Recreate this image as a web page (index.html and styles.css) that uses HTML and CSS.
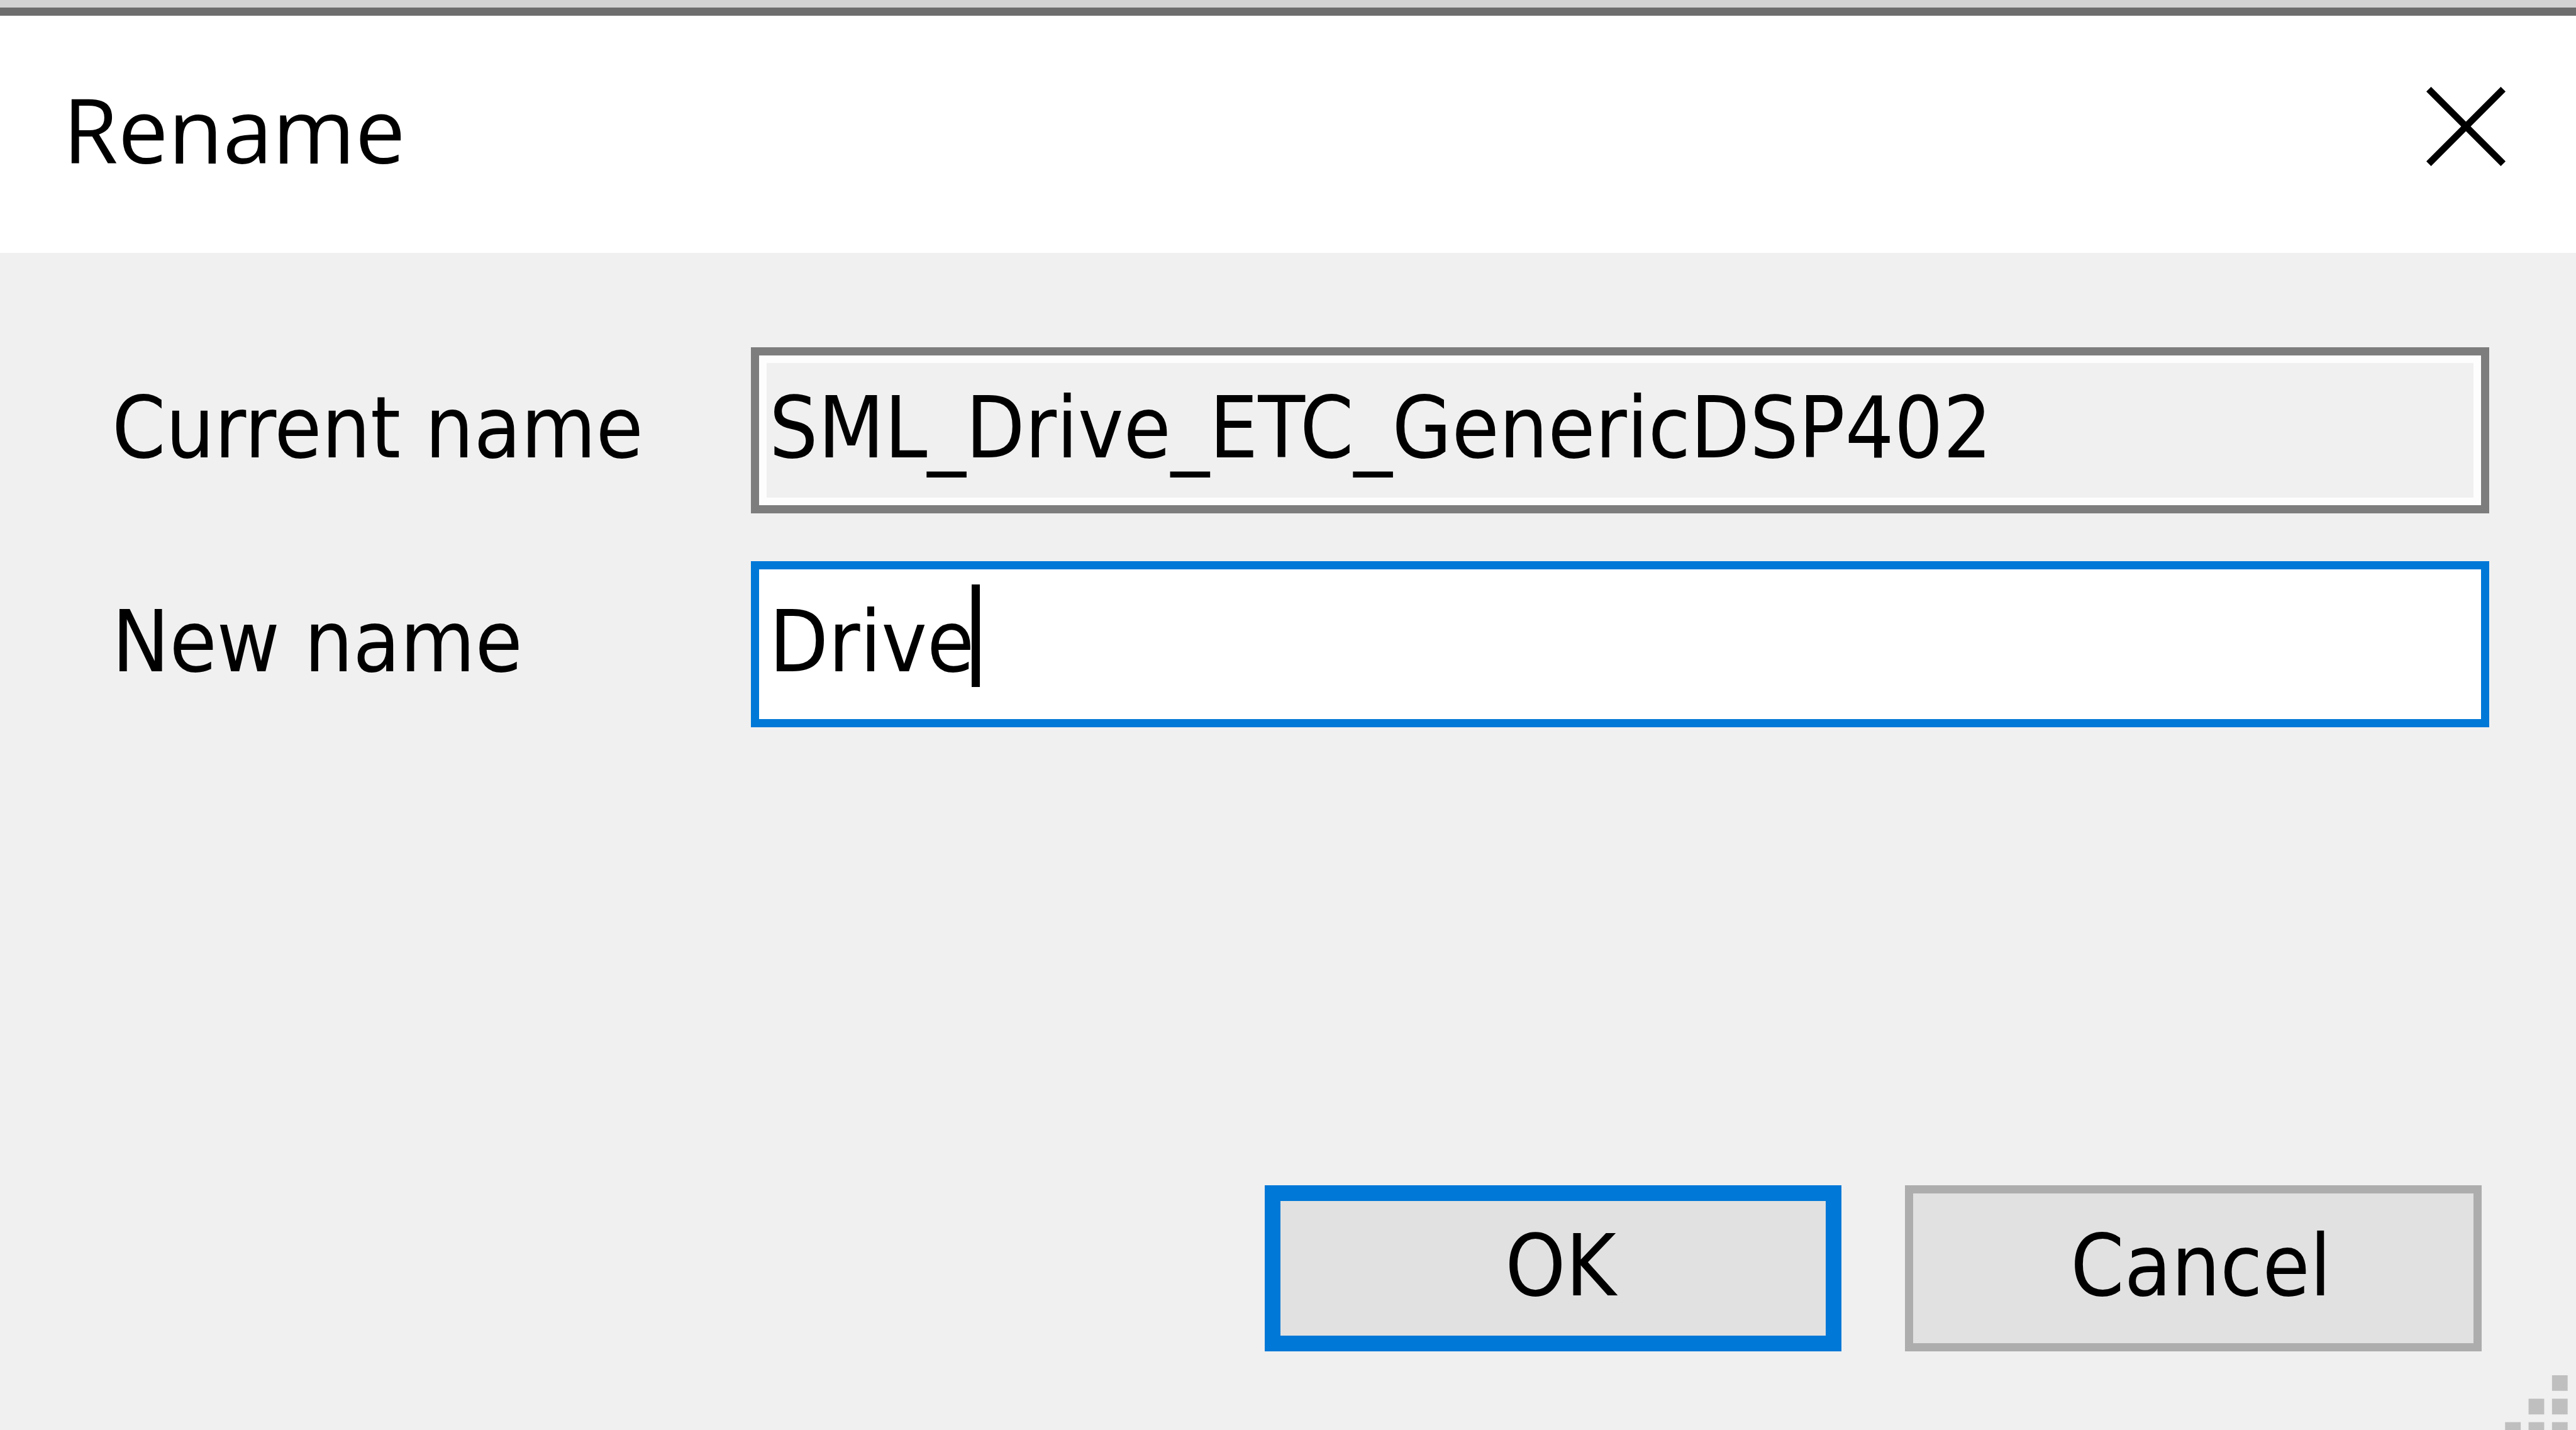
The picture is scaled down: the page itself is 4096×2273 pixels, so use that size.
FILE: index.html
```html
<!DOCTYPE html>
<html lang="en">
<head>
<meta charset="utf-8">
<title>Rename</title>
<link rel="stylesheet" href="styles.css">
</head>
<body>
<form class="dialog">
  <header class="titlebar">
    <h1 class="title">Rename</h1>
    <button class="close" type="button" aria-label="Close">
      <svg class="close-icon" viewBox="0 0 10 10" aria-hidden="true">
        <path d="M.3 .3 9.7 9.7M9.7 .3 .3 9.7"/>
      </svg>
    </button>
  </header>
  <main class="fields">
    <label class="label" for="current">Current name</label>
    <div class="field">
      <input class="input input-readonly" id="current" type="text" value="SML_Drive_ETC_GenericDSP402" readonly>
    </div>
    <label class="label" for="new">New name</label>
    <div class="field">
      <input class="input input-active" id="new" type="text" value="Drive" spellcheck="false">
      <span class="caret"></span>
    </div>
  </main>
  <footer class="actions">
    <button class="button button-default" type="submit">OK</button>
    <button class="button" type="button">Cancel</button>
  </footer>
  <svg class="grip" viewBox="0 0 8 7" aria-hidden="true">
    <path d="M6 0h2v2h-2zM3 3h2v2h-2zM6 3h2v2h-2zM0 6h2v1h-2zM3 6h2v1h-2zM6 6h2v1h-2z"/>
  </svg>
</form>
</body>
</html>
```
FILE: styles.css
```css
* {
  box-sizing: border-box;
}

body {
  margin: 0;
  background: #f0f0f0;
  color: #000;
  font-family: "DejaVu Sans Condensed", "DejaVu Sans", sans-serif;
  font-size: 136px;
  line-height: 160px;
}

.dialog {
  position: relative;
  display: flex;
  flex-direction: column;
  min-height: 100vh;
  border-top: 12px solid #d3d3d3;
}

.titlebar {
  display: flex;
  justify-content: space-between;
  align-items: center;
  padding: 80px 100px 97px;
  border-top: 13px solid #6d6d6d;
  background: #fff;
}

.title {
  margin: 0;
  font-family: "Open Sans", "Noto Sans", sans-serif;
  font-size: 142px;
  font-weight: 400;
  line-height: 200px;
}

.close {
  display: flex;
  padding: 8px 12px 16px;
  border: 0;
  background: none;
}

.close-icon {
  width: 126px;
  height: 126px;
  fill: none;
  stroke: #000;
  stroke-width: 0.85;
}

.fields {
  display: grid;
  grid-template-columns: 1016px 1fr;
  row-gap: 76px;
  align-items: center;
  padding: 150px 138px 0 178px;
}

.label {
  padding-bottom: 8px;
}

.field {
  position: relative;
}

.input {
  display: block;
  width: 100%;
  height: 264px;
  padding: 0 16px 8px;
  border: 13px solid #7d7d7d;
  border-radius: 0;
  outline: 0;
  background: #fff;
  color: #000;
  font: inherit;
}

.input-readonly {
  background: #f0f0f0;
  box-shadow: inset 0 0 0 12px #fdfdfd;
}

.input-active {
  border-color: #0078d7;
}

.caret {
  position: absolute;
  left: 351px;
  top: 37px;
  width: 13px;
  height: 163px;
  background: #000;
}

.actions {
  display: flex;
  justify-content: flex-end;
  gap: 101px;
  margin-top: auto;
  padding: 0 150px 125px;
}

.button {
  width: 917px;
  height: 264px;
  padding: 0 0 8px 24px;
  border: 13px solid #adadad;
  border-radius: 0;
  background: #e1e1e1;
  color: #000;
  font: inherit;
}

.button-default {
  border: 25px solid #0078d7;
}

.grip {
  position: absolute;
  right: 13px;
  bottom: 0;
  width: 100px;
  height: 87px;
  fill: #bfbfbf;
}
```
